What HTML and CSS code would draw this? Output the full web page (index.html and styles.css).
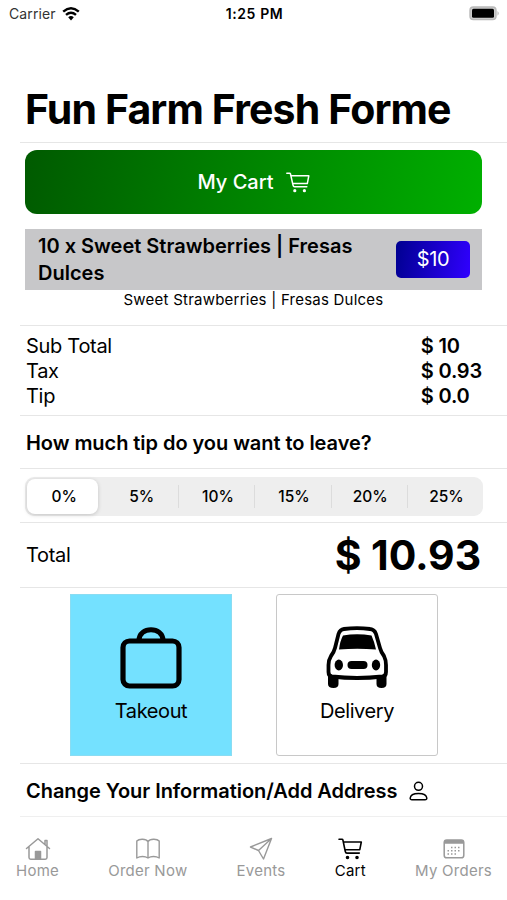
FILE: index.html
```html
<!DOCTYPE html>
<html lang="en">
<head>
    <meta charset="UTF-8">
    <meta name="viewport" content="width=device-width, initial-scale=1.0">
    <title>My Cart</title>
    <link rel="stylesheet" href="styles.css">
</head>
<body>
    <!-- Status bar -->
    <header class="status-bar">
        <div class="carrier">
            <span>Carrier</span>
            <svg class="wifi" viewBox="0 0 18 14">
                <path d="M1.2 4.6 Q9 -2 16.8 4.6" fill="none" stroke="#000" stroke-width="2.5"/>
                <path d="M4 7.9 Q9 3.6 14 7.9" fill="none" stroke="#000" stroke-width="2.4"/>
                <path d="M6.2 10.3 Q9 7.9 11.8 10.3 L9 13.5 Z" fill="#000"/>
            </svg>
        </div>
        <span class="time">1:25 PM</span>
        <svg class="battery" viewBox="0 0 31 15">
            <rect x="1" y="1" width="26" height="12.6" rx="3.4" fill="#ccc" stroke="#b9b9b9" stroke-width="1.4"/>
            <rect x="3" y="2.8" width="22" height="9" rx="1.5" fill="#000"/>
            <path d="M28.5 5 Q31 7.3 28.5 9.8 Z" fill="#b5b5b5"/>
        </svg>
    </header>

    <h1>Fun Farm Fresh Forme</h1>

    <main class="list">
        <section class="row cart">
            <button class="cart-button">
                <span>My Cart</span>
                <svg class="cart-icon" viewBox="0 0 24 21">
                    <path d="M0.8 1.2 H3.6 Q4.3 1.2 4.5 2 L7 13.2 Q7.3 14.8 8.6 14.8 H20.8 M5 3.8 H22.8 L21.3 11.6 H6.6" fill="none" stroke="currentColor" stroke-width="1.5" stroke-linecap="round" stroke-linejoin="round"/>
                    <circle cx="8.8" cy="18.7" r="1.6" fill="currentColor"/>
                    <circle cx="18.4" cy="18.7" r="1.6" fill="currentColor"/>
                </svg>
            </button>
            <div class="item">
                <span class="item-name">10 x Sweet Strawberries | Fresas Dulces</span>
                <span class="price">$10</span>
            </div>
            <p class="item-note">Sweet Strawberries | Fresas Dulces</p>
        </section>

        <section class="row costs">
            <div class="labels">
                <span>Sub Total</span>
                <span>Tax</span>
                <span>Tip</span>
            </div>
            <div class="amounts">
                <span>$ 10</span>
                <span>$ 0.93</span>
                <span>$ 0.0</span>
            </div>
        </section>

        <section class="row question">How much tip do you want to leave?</section>

        <section class="row tips">
            <div class="segments">
                <span class="segment selected">0%</span>
                <span class="segment">5%</span>
                <span class="segment">10%</span>
                <span class="segment">15%</span>
                <span class="segment">20%</span>
                <span class="segment">25%</span>
            </div>
        </section>

        <section class="row total">
            <span>Total</span>
            <strong>$ 10.93</strong>
        </section>

        <section class="row methods">
            <div class="method takeout">
                <svg viewBox="0 0 64 64">
                    <rect x="4" y="15" width="56" height="45" rx="6.5" fill="none" stroke="#000" stroke-width="5.2"/>
                    <path d="M20 14.500 C20 0 44 0 44 14.500" fill="none" stroke="#000" stroke-width="5"/>
                </svg>
                <span>Takeout</span>
            </div>
            <div class="method">
                <svg viewBox="0 0 64 64">
                    <path d="M13.5 8 Q15 3.500 19 3 Q32 1.200 45 3 Q49.500 3.500 51 8 L55 22 Q56 26 59 30 Q61 34 61 39 V46 Q61 50 57.500 50.500 Q32 53.500 7 50.500 Q3.500 50 3.500 46 V39 Q3.500 34 6 30 Q9 26 10 22 Z" fill="#fff" stroke="#000" stroke-width="3.8"/>
                    <path d="M18 9.500 Q32 7 46.500 9.500 Q49.500 16 51 23.500 Q32 22 14 23.500 Q15 15 18 9.500 Z" fill="#000"/>
                    <path d="M3 49 Q8 51.500 13.500 51 V58 Q13.500 62 8.500 62 Q3 62 3 58 Z M51.500 51 Q56 51 61.500 49 V58 Q61.500 62 56.500 62 Q51.500 62 51.500 58 Z" fill="#000"/>
                    <ellipse cx="13.800" cy="39" rx="4.200" ry="5.400"/>
                    <ellipse cx="51" cy="39" rx="4.200" ry="5.400"/>
                    <rect x="22.500" y="35" width="20" height="8" rx="4"/>
                </svg>
                <span>Delivery</span>
            </div>
        </section>

        <section class="row address">
            <span>Change Your Information/Add Address</span>
            <svg class="person" viewBox="0 0 20 20">
                <circle cx="9.500" cy="5.300" r="4" fill="none" stroke="#000" stroke-width="1.5"/>
                <path d="M3 18.700 Q1 18.700 1.200 17 C1.800 11 17.200 11 17.800 17 Q18 18.700 16 18.700 Z" fill="none" stroke="#000" stroke-width="1.5"/>
            </svg>
        </section>
    </main>

    <!-- Bottom tabs -->
    <nav class="tabs">
        <a class="tab">
            <svg viewBox="0 0 26 24" fill="none" stroke="currentColor" stroke-width="1.5" stroke-linejoin="round" stroke-linecap="round">
                <path d="M1.500 11.500 L13 1.800 L24.500 11.500 M4 10 V20.500 Q4 22.200 5.700 22.200 H20.300 Q22 22.200 22 20.500 V10 M20 7.500 V3.500 H22 V9.300"/>
                <path d="M10.500 22 V14.500 H15.500 V22 Z" fill="currentColor"/>
            </svg>
            <span>Home</span>
        </a>
        <a class="tab">
            <svg viewBox="0 0 26 24" fill="none" stroke="currentColor" stroke-width="1.400" stroke-linejoin="round">
                <path d="M13 4.500 C11 1.500 4 1.500 1.800 4 V21 C5 19 10 19 13 21 C16 19 21 19 24.200 21 V4 C22 1.500 15 1.500 13 4.500 V21"/>
            </svg>
            <span>Order Now</span>
        </a>
        <a class="tab">
            <svg viewBox="0 0 26 24" fill="none" stroke="currentColor" stroke-width="1.400" stroke-linejoin="round">
                <path d="M23.500 1.500 L2.500 10 L10.500 13.500 L15.500 22 Z M23.500 1.500 L10.500 13.500"/>
            </svg>
            <span>Events</span>
        </a>
        <a class="tab active">
            <svg viewBox="0 0 26 24" fill="none" stroke="currentColor" stroke-width="1.600" stroke-linejoin="round" stroke-linecap="round">
                <path d="M2 2.200 H5 Q5.700 2.200 5.900 3 L8.300 14.500 Q8.600 16.100 10 16.100 H22.300 M6.500 5 H24.300 L22.800 12.700 H8"/>
                <circle cx="10.500" cy="20.500" r="1" fill="currentColor"/>
                <circle cx="20" cy="20.500" r="1" fill="currentColor"/>
            </svg>
            <span>Cart</span>
        </a>
        <a class="tab">
            <svg viewBox="0 0 26 24">
                <rect x="3.200" y="3" width="19.600" height="17.800" rx="2.600" fill="none" stroke="currentColor" stroke-width="1.500"/>
                <path d="M3 6.800 Q3 3 6 3 H20 Q23 3 23 6.800 Z" fill="currentColor"/>
                <path d="M10 10.500 H20 M6.500 13.700 H20 M6.500 17 H17" stroke="currentColor" stroke-width="1.500" stroke-dasharray="1.500 2"/>
            </svg>
            <span>My Orders</span>
        </a>
    </nav>
</body>
</html>
```

FILE: styles.css
```css
* {
    box-sizing: border-box;
}

body {
    width: 507px;
    height: 900px;
    margin: 0;
    overflow: hidden;
    background-color: #fff;
    color: #000;
    font-family: Inter, sans-serif;
    font-size: 20px;
    letter-spacing: -0.3px;
    white-space: nowrap;
}

svg {
    display: block;
    flex: none;
}

/* Status bar */
.status-bar {
    display: grid;
    grid-template-columns: 1fr auto 1fr;
    align-items: center;
    height: 27px;
    padding: 0 7px 0 9px;
    font-size: 14px;
    letter-spacing: 0.1px;
}

.carrier {
    display: flex;
    align-items: center;
    gap: 6px;
    color: #333;
}

.wifi {
    width: 18px;
    height: 14px;
}

.time {
    font-weight: 600;
    letter-spacing: 0.6px;
}

.battery {
    width: 31px;
    height: 15px;
    justify-self: end;
}

h1 {
    height: 115px;
    margin: 0;
    padding: 57px 0 0 25px;
    font-size: 41px;
    line-height: 50px;
    font-weight: 700;
    letter-spacing: -0.88px;
}

/* List rows */
.list {
    padding-left: 20px;
}

.row {
    padding: 0 25px 0 6px;
    border-top: 1px solid #e6e6e6;
}

.cart {
    height: 183px;
    padding: 7px 25px 0 5px;
}

.cart-button {
    display: flex;
    align-items: center;
    justify-content: center;
    gap: 12px;
    width: 100%;
    height: 64px;
    padding: 0;
    border: none;
    border-radius: 12px;
    background: linear-gradient(100deg, #005a00, #00b000);
    color: #fff;
    font-family: inherit;
    font-size: 20px;
    font-weight: 500;
}

.cart-icon {
    width: 24px;
    height: 21px;
}

.item {
    display: flex;
    align-items: center;
    justify-content: space-between;
    height: 61px;
    margin-top: 15px;
    padding: 0 12px 0 13px;
    background-color: #c7c7c9;
}

.item-name {
    width: 330px;
    font-weight: 600;
    line-height: 27px;
    letter-spacing: 0;
    white-space: normal;
}

.price {
    width: 74px;
    height: 37px;
    border-radius: 5px;
    background: linear-gradient(100deg, #000090, #3000ff);
    color: #fff;
    line-height: 37px;
    text-align: center;
}

.item-note {
    margin: 0;
    font-size: 15px;
    line-height: 19px;
    letter-spacing: 0.23px;
    text-align: center;
}

.costs {
    display: flex;
    justify-content: space-between;
    height: 90px;
    padding-top: 8px;
    line-height: 25px;
}

.labels, .amounts {
    display: flex;
    flex-direction: column;
}

.amounts {
    font-weight: 600;
    letter-spacing: -0.2px;
}

.question, .address {
    display: flex;
    align-items: center;
    height: 53px;
    padding-top: 1px;
    font-weight: 600;
    letter-spacing: -0.05px;
}

/* Tip picker */
.tips {
    height: 54px;
    padding: 8px 24px 0 5px;
}

.segments {
    display: grid;
    grid-template-columns: repeat(6, 1fr);
    height: 39px;
    padding: 2px 0 2px 1px;
    border-radius: 9px;
    background-color: #eee;
    font-size: 15.5px;
    font-weight: 500;
    letter-spacing: 0;
}

.segment {
    display: flex;
    align-items: center;
    justify-content: center;
    padding-left: 3px;
}

.segment.selected {
    margin: 0 4px 0 1px;
    border-radius: 8px;
    background-color: #fff;
    box-shadow: 0 1px 4px rgba(0, 0, 0, 0.18);
}

.segment:nth-child(n+3) {
    background: linear-gradient(#dcdcdc, #dcdcdc) left center / 1px 23px no-repeat;
}

.total {
    display: flex;
    align-items: center;
    justify-content: space-between;
    height: 65px;
    padding-right: 26px;
}

.total strong {
    font-size: 41px;
    font-weight: 700;
    letter-spacing: -0.1px;
}

/* Takeout / delivery */
.methods {
    display: flex;
    gap: 44px;
    height: 176px;
    padding: 6px 0 0 50px;
}

.method {
    display: flex;
    flex-direction: column;
    align-items: center;
    gap: 9px;
    width: 162px;
    height: 162px;
    padding-top: 31px;
    border: 1px solid #c8c8c8;
    border-radius: 3px;
    letter-spacing: -0.4px;
}

.method svg {
    width: 64px;
    height: 64px;
}

.method.takeout {
    border-color: #8adcf2;
    border-radius: 0;
    background-color: #74e1ff;
}

.address {
    gap: 12px;
    height: 54px;
    border-bottom: 1px solid #efefef;
}

.person {
    width: 20px;
    height: 20px;
}

/* Bottom tabs */
.tabs {
    display: flex;
    justify-content: space-between;
    padding: 20px 15px 0 16px;
    color: #999;
    font-size: 15px;
    letter-spacing: 0.25px;
}

.tab {
    display: flex;
    flex-direction: column;
    align-items: center;
    line-height: 19px;
}

.tab svg {
    width: 26px;
    height: 24px;
}

.tab.active {
    color: #000;
}
```
